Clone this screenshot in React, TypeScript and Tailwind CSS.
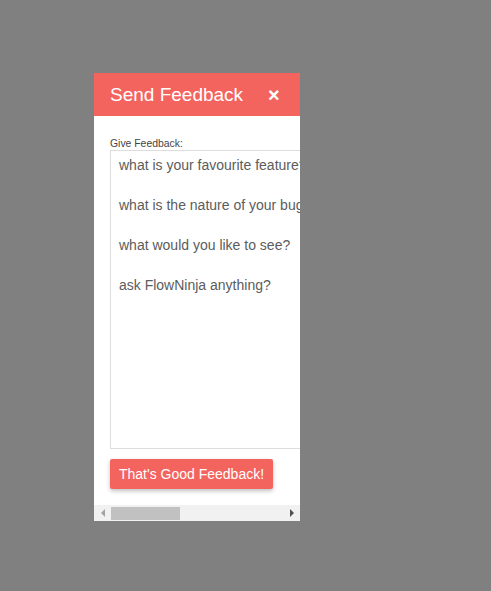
import React from "react";

const PROMPTS = [
  "what is your favourite feature?",
  "what is the nature of your bug?",
  "what would you like to see?",
  "ask FlowNinja anything?",
];

function FakeScrollbar() {
  return (
    <div className="flex h-4 items-center bg-[#f1f1f1]">
      <div className="flex w-[17px] justify-center">
        <span className="h-0 w-0 border-y-[4px] border-r-[4px] border-y-transparent border-r-[#a3a3a3]" />
      </div>
      <div className="h-[13px] w-[69px] bg-[#c1c1c1]" />
      <div className="flex-1" />
      <div className="flex w-[17px] justify-center">
        <span className="h-0 w-0 border-y-[4px] border-l-[4px] border-y-transparent border-l-[#505050]" />
      </div>
    </div>
  );
}

export default function App() {
  return (
    <div
      className="min-h-[591px] w-full bg-[#808080] pl-[94px] pt-[73px]"
      style={{ fontFamily: '"Liberation Sans", Arial, sans-serif' }}
    >
      <div className="flex h-[448px] w-[206px] flex-col overflow-hidden bg-white">
        <div className="flex h-[43px] shrink-0 items-center bg-[#f4645f] px-4 text-white">
          <span className="text-[19px] leading-none">Send Feedback</span>
          <span className="ml-[25px] text-[20px] font-bold leading-none">×</span>
        </div>

        <div className="flex-1 pl-4 pt-[22px]">
          <div className="w-[260px]">
            <label className="block text-[10.4px] leading-3 text-[#444]">Give Feedback:</label>
            <div className="h-[299px] border border-[#ddd] px-2 pt-[4px] text-[14px] leading-5 text-[#5c5c5c] whitespace-nowrap">
              {PROMPTS.map((p, i) => (
                <React.Fragment key={p}>
                  <div>{p}</div>
                  {i < PROMPTS.length - 1 && <div className="h-5" />}
                </React.Fragment>
              ))}
            </div>
          </div>
          <button
            type="button"
            className="mt-[10px] h-[30px] rounded-[2px] bg-[#f4645f] px-[9px] text-[14px] text-white shadow-[0_2px_4px_rgba(0,0,0,0.25)]"
          >
            That's Good Feedback!
          </button>
        </div>

        <FakeScrollbar />
      </div>
    </div>
  );
}
